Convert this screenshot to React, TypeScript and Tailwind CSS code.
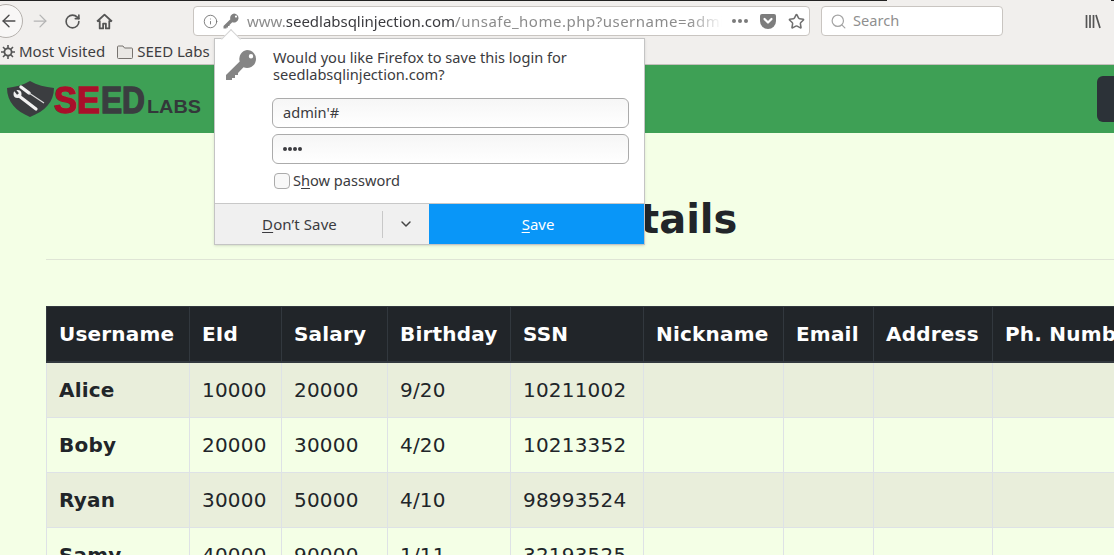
import { ArrowLeft, ArrowRight, ChevronDown, Info, RotateCw, Search, Star } from "lucide-react";

const uiFont = "font-['Noto_Sans',sans-serif]";

const columns = [
  { label: "Username", width: "w-[143px]" },
  { label: "EId", width: "w-[92px]" },
  { label: "Salary", width: "w-[106px]" },
  { label: "Birthday", width: "w-[123px]" },
  { label: "SSN", width: "w-[133px]" },
  { label: "Nickname", width: "w-[140px]" },
  { label: "Email", width: "w-[90px]" },
  { label: "Address", width: "w-[119px]" },
  { label: "Ph. Number", width: "w-[170px]" },
];

const rows = [
  ["Alice", "10000", "20000", "9/20", "10211002"],
  ["Boby", "20000", "30000", "4/20", "10213352"],
  ["Ryan", "30000", "50000", "4/10", "98993524"],
  ["Samy", "40000", "90000", "1/11", "32193525"],
];

const KeyIcon = ({ className }: { className?: string }) => (
  <svg viewBox="0 0 32 32" className={className}>
    <path
      fillRule="evenodd"
      fill="currentColor"
      d="M22 1a9 9 0 1 1-3.500 17.300L13 24v2h-3v3H7v2H1v-5L14.700 12.500A9 9 0 0 1 22 1Zm4 4a2.200 2.200 0 1 0 0 4.400 2.200 2.200 0 0 0 0-4.400Z"
    />
  </svg>
);

const Logo = () => (
  <svg width="200" height="42" viewBox="0 0 200 42" className="block">
    <path d="M2 10 C10 9 18 7 25 3 C32 7 40 9 49 10 C49 24 40 33 25 39 C11 33 2 24 2 10 Z" fill="#3b3d40" />
    {/* wrench */}
    <path d="M14 18 L31 31" stroke="#f1f1f1" strokeWidth="3.2" strokeLinecap="round" />
    <circle cx="12.500" cy="16" r="4" fill="#f1f1f1" />
    <path d="M9 11 L13 16" stroke="#3b3d40" strokeWidth="2.4" />
    {/* screwdriver */}
    <path d="M16 9 L24 15" stroke="#f1f1f1" strokeWidth="3.4" strokeLinecap="round" />
    <path d="M24 15 L39 25" stroke="#dcdcdc" strokeWidth="1.1" />
    <text x="49" y="35" fontFamily="Liberation Sans" fontWeight="700" fontSize="36" textLength="46" lengthAdjust="spacingAndGlyphs" fill="#a90f2a" stroke="#a90f2a" strokeWidth="1.4">SE</text>
    <text x="96" y="35" fontFamily="Liberation Sans" fontWeight="700" fontSize="36" textLength="44" lengthAdjust="spacingAndGlyphs" fill="#3a3d40" stroke="#3a3d40" strokeWidth="1.4">ED</text>
    <text x="142" y="35" fontFamily="Liberation Sans" fontWeight="700" fontSize="18" textLength="54" lengthAdjust="spacingAndGlyphs" fill="#33383a">LABS</text>
  </svg>
);

const SavePopup = () => (
  <div className={`absolute left-[214px] top-[38px] z-10 flex h-[207px] w-[431px] flex-col border border-[#c4c4c4] bg-white text-[#3b3b40] shadow-sm ${uiFont}`}>
    <div className="absolute -top-[8px] left-[9px] size-[14px] translate-y-[1px] rotate-45 border-l border-t border-[#d4d4d4] bg-white" />
    <div className="relative flex flex-1 pl-[10px] pt-[10px]">
      <KeyIcon className="size-[32px] text-[#858585]" />
      <div className="ml-[16px] flex-1">
        <p className="text-[14.6px] leading-[17px]">
          Would you like Firefox to save this login for
          <br />
          seedlabsqlinjection.com?
        </p>
        <div className="-ml-[1px] mt-[15px] flex h-[30px] w-[357px] items-center rounded-md border border-[#ababab] bg-gradient-to-b from-[#f6f6f6] to-white pl-[10px] text-[14.6px]">
          admin'#
        </div>
        <div className="-ml-[1px] mt-[6px] flex h-[30px] w-[357px] items-center rounded-md border border-[#ababab] bg-gradient-to-b from-[#f6f6f6] to-white pl-[10px] text-[14.6px]">
          <span className="flex gap-[1px]">
            <i className="size-[4px] rounded-full bg-[#3b3b40]" />
            <i className="size-[4px] rounded-full bg-[#3b3b40]" />
            <i className="size-[4px] rounded-full bg-[#3b3b40]" />
            <i className="size-[4px] rounded-full bg-[#3b3b40]" />
          </span>
        </div>
        <div className="mt-[8px] flex items-center pl-[1px] text-[14.6px] leading-[17px]">
          <span className="mr-[3px] size-[16px] rounded-[4px] border border-[#ababab] bg-[#f8f8f8]" />
          S<u className="underline-offset-2">h</u>ow password
        </div>
      </div>
    </div>
    <div className="flex h-[41px] border-t border-[#c8c8c8] text-[15px]">
      <div className="flex w-[167px] items-center justify-center bg-[#f0f0f0] pl-[2px]">
        <span className="tracking-[0.1px]">
          <u className="underline-offset-2">D</u>on’t Save
        </span>
      </div>
      <div className="flex w-[47px] items-center justify-center bg-[#f0f0f0]">
        <div className="flex h-[27px] w-full items-center justify-center border-l border-[#c8c8c8]">
          <ChevronDown size={16} strokeWidth={2.2} className="text-[#444]" />
        </div>
      </div>
      <div className="flex flex-1 items-center justify-center bg-[#0996f8] pl-[3px] text-white">
        <span>
          <u className="underline-offset-2">S</u>ave
        </span>
      </div>
    </div>
  </div>
);

const BrowserChrome = () => (
  <header className={`h-[65px] shrink-0 border-b border-[#c4c0bc] bg-[#f1efed] text-[#3e3e42] ${uiFont}`}>
    <div className="flex h-px">
      <div className="w-[887px] bg-[#222]" />
      <div className="w-[224px]" />
      <div className="flex-1 bg-[#222]" />
    </div>
    <div className="flex h-[40px] items-center">
      <div className="-ml-[11px] flex size-[34px] shrink-0 items-center justify-center rounded-full border border-[#b5b1ad] bg-[#f8f7f6]">
        <ArrowLeft size={20} strokeWidth={1.7} className="ml-[5px] text-[#4d4d4d]" />
      </div>
      <ArrowRight size={20} strokeWidth={1.5} className="ml-[7px] text-[#b4b4b4]" />
      <RotateCw size={17} strokeWidth={2.3} className="ml-[14px] text-[#555]" />
      <svg width="17" height="17" viewBox="0 0 16 16" className="ml-[15px] text-[#555]">
        <path d="M1 8 8 1.500 15 8M3.500 7v7.500h3.200V10h2.600v4.500h3.200V7" fill="none" stroke="currentColor" strokeWidth="1.7" strokeLinejoin="round" />
      </svg>
      <div className="ml-[80px] flex h-[30px] w-[617px] shrink-0 items-center rounded border border-[#c9c5c1] bg-white pl-[9px]">
        <Info size={15} strokeWidth={1.4} className="text-[#707070]" />
        <KeyIcon className="ml-[5px] size-[16px] text-[#808080]" />
        <div className="ml-[8px] w-[475px] overflow-hidden whitespace-nowrap text-[15px] text-[#8c8c8c] [mask-image:linear-gradient(to_right,black_93%,transparent)]">
          www.<span className="tracking-[-0.02px] text-[#3b3b3f]">seedlabsqlinjection.com</span>
          <span className="tracking-[0.5px]">/unsafe_home.php?username=admin</span>
        </div>
        <div className="ml-[10px] flex gap-[2px]">
          <i className="size-[4px] rounded-full bg-[#7a7a7a]" />
          <i className="size-[4px] rounded-full bg-[#7a7a7a]" />
          <i className="size-[4px] rounded-full bg-[#7a7a7a]" />
        </div>
        <svg width="16" height="15" viewBox="0 0 16 15" className="ml-[12px]">
          <path d="M2 0h12a2 2 0 0 1 2 2v5a8 8 0 0 1-16 0V2a2 2 0 0 1 2-2Z" fill="#7d7d7d" />
          <path d="M4.500 5 8 8.500 11.500 5" fill="none" stroke="#fff" strokeWidth="2.200" strokeLinecap="round" strokeLinejoin="round" />
        </svg>
        <Star size={17} strokeWidth={2.2} className="ml-[12px] text-[#707070]" />
      </div>
      <div className="ml-[11px] flex h-[30px] w-[182px] shrink-0 items-center rounded border border-[#c9c5c1] bg-white pl-[8px] text-[14.6px] text-[#8f8f8f]">
        <Search size={17} strokeWidth={1.7} className="text-[#a4a4a4]" />
        <span className="ml-[6px]">Search</span>
      </div>
      <svg width="16" height="15" viewBox="0 0 16 15" className="ml-[82px] text-[#555]">
        <path d="M1.500 1v13M5 1v13M8.500 1v13M11 1l4 13" fill="none" stroke="currentColor" strokeWidth="1.7" />
      </svg>
    </div>
    <div className="flex h-[21px] items-center whitespace-nowrap text-[15px]">
      <svg width="14" height="14" viewBox="0 0 14 14" className="ml-[1px] text-[#555]">
        <circle cx="7" cy="7" r="3.600" fill="none" stroke="currentColor" strokeWidth="1.800" />
        <path d="M7 0v3M7 11v3M0 7h3M11 7h3M2 2l2.200 2.200M9.800 9.800 12 12M12 2 9.800 4.200M4.200 9.800 2 12" stroke="currentColor" strokeWidth="1.600" />
      </svg>
      <span className="ml-[4px]">Most Visited</span>
      <svg width="16" height="14" viewBox="0 0 16 14" className="ml-[12px]">
        <path d="M.5 12.500V2A1 1 0 0 1 1.500 1H6l1.500 2h7a1 1 0 0 1 1 1v8.500a1 1 0 0 1-1 1h-13a1 1 0 0 1-1-1Z" fill="#e9e7e4" stroke="#77736f" />
      </svg>
      <span className="ml-[4px]">SEED Labs</span>
    </div>
  </header>
);

export default function App() {
  return (
    <div className="relative flex h-[555px] w-[1114px] flex-col overflow-hidden bg-[#f4ffe6] font-['DejaVu_Sans',sans-serif] text-[#212529]">
      <BrowserChrome />
      <SavePopup />

      <nav className="flex h-[68px] shrink-0 items-center justify-between bg-[#3ea055] pl-[5px]">
        <Logo />
        <div className="-mr-[40px] h-[46px] w-[57px] rounded-md bg-[#2c3238]" />
      </nav>

      <main className="pl-[46px]">
        <h1 className="mt-[62px] w-[1108px] text-center text-[40px] font-bold leading-[48px]">User Details</h1>
        <hr className="mt-[16px] w-[1200px] border-[#dfe5d6]" />
        <table className="mt-[46px] w-[1116px] table-fixed border-collapse text-[20px] leading-[30px] tracking-[0.2px]">
          <thead>
            <tr className="bg-[#212529] text-white">
              {columns.map((col) => (
                <th key={col.label} className={`${col.width} whitespace-nowrap border border-b-2 border-[#32383e] p-[12px] text-left font-bold`}>
                  {col.label}
                </th>
              ))}
            </tr>
          </thead>
          <tbody>
            {rows.map((row, i) => (
              <tr key={row[0]} className={i % 2 === 0 ? "bg-[#e9eedb]" : ""}>
                {columns.map((col, j) => (
                  <td key={col.label} className={`border border-[#dee2e6] p-[12px] ${j === 0 ? "font-bold" : ""}`}>
                    {row[j] ?? ""}
                  </td>
                ))}
              </tr>
            ))}
          </tbody>
        </table>
      </main>
    </div>
  );
}
